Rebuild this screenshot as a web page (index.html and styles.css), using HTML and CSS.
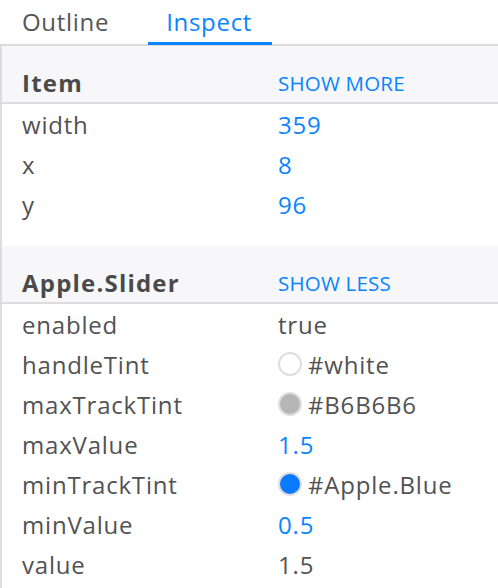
FILE: index.html
```html
<!DOCTYPE html>
<html>
<head>
<meta charset="utf-8">
<link rel="stylesheet" href="styles.css">
</head>
<body>
<div class="tabs">
  <div class="tab">Outline</div>
  <div class="tab active">Inspect</div>
</div>
<div class="panel">
  <section class="group">
    <div class="ghead"><span class="gtitle">Item</span><span class="glink">SHOW MORE</span></div>
    <div class="row"><span class="key">width</span><span class="val num">359</span></div>
    <div class="row"><span class="key">x</span><span class="val num">8</span></div>
    <div class="row"><span class="key">y</span><span class="val num">96</span></div>
  </section>
  <section class="group second">
    <div class="ghead"><span class="gtitle">Apple.Slider</span><span class="glink">SHOW LESS</span></div>
    <div class="row"><span class="key">enabled</span><span class="val">true</span></div>
    <div class="row"><span class="key">handleTint</span><span class="val"><i class="swatch sw-white"></i>#white</span></div>
    <div class="row"><span class="key">maxTrackTint</span><span class="val"><i class="swatch sw-gray"></i>#B6B6B6</span></div>
    <div class="row"><span class="key">maxValue</span><span class="val num">1.5</span></div>
    <div class="row"><span class="key">minTrackTint</span><span class="val"><i class="swatch sw-blue"></i>#Apple.Blue</span></div>
    <div class="row"><span class="key">minValue</span><span class="val num">0.5</span></div>
    <div class="row"><span class="key">value</span><span class="val">1.5</span></div>
  </section>
</div>
</body>
</html>
```
FILE: styles.css
```css
html, body {
  margin: 0;
  padding: 0;
  background: #fff;
}
body {
  font-family: "Open Sans", Lato, sans-serif;
  color: #555;
  width: 498px;
  height: 588px;
  overflow: hidden;
}
.tabs {
  display: flex;
  align-items: flex-start;
  height: 44px;
  border-bottom: 2px solid #dcdcdc;
  padding-left: 4px;
  gap: 21px;
}
.tab {
  box-sizing: border-box;
  height: 45px;
  padding: 0 18px;
  font-size: 24px;
  letter-spacing: 0.7px;
  line-height: 43px;
  color: #555;
}
.tab.active {
  padding-right: 20px;
  color: #0a84ff;
  border-bottom: 3px solid #0a84ff;
}
.panel {
  border-left: 2px solid #dcdcdc;
  min-height: 542px;
}
.group.second {
  margin-top: 22px;
}
.ghead {
  display: grid;
  grid-template-columns: 256px 1fr;
  align-items: end;
  height: 56px;
  padding-left: 20px;
  background: #f7f7f9;
  border-bottom: 2px solid #dcdcdc;
}
.gtitle {
  font-weight: 700;
  font-size: 24px;
  letter-spacing: 1.2px;
  line-height: 33px;
  color: #4a4a4a;
  padding-bottom: 3px;
}
.glink {
  font-size: 20.5px;
  letter-spacing: 0.2px;
  line-height: 28px;
  color: #0a84ff;
  padding-bottom: 5px;
}
.row {
  display: grid;
  grid-template-columns: 256px 1fr;
  align-items: center;
  height: 40px;
  padding-left: 20px;
  font-size: 24px;
  letter-spacing: 0.8px;
  line-height: 33px;
}
.key {
  color: #525252;
}
.val {
  display: flex;
  align-items: center;
  color: #525252;
}
.val.num {
  color: #0a84ff;
}
.swatch {
  display: inline-block;
  flex: none;
  box-sizing: border-box;
  width: 24px;
  height: 24px;
  border-radius: 50%;
  border: 2px solid #dedede;
  margin-right: 6px;
}
.sw-white { background: #fff; }
.sw-gray { background: #b6b6b6; }
.sw-blue { background: #0a7aff; }
```
